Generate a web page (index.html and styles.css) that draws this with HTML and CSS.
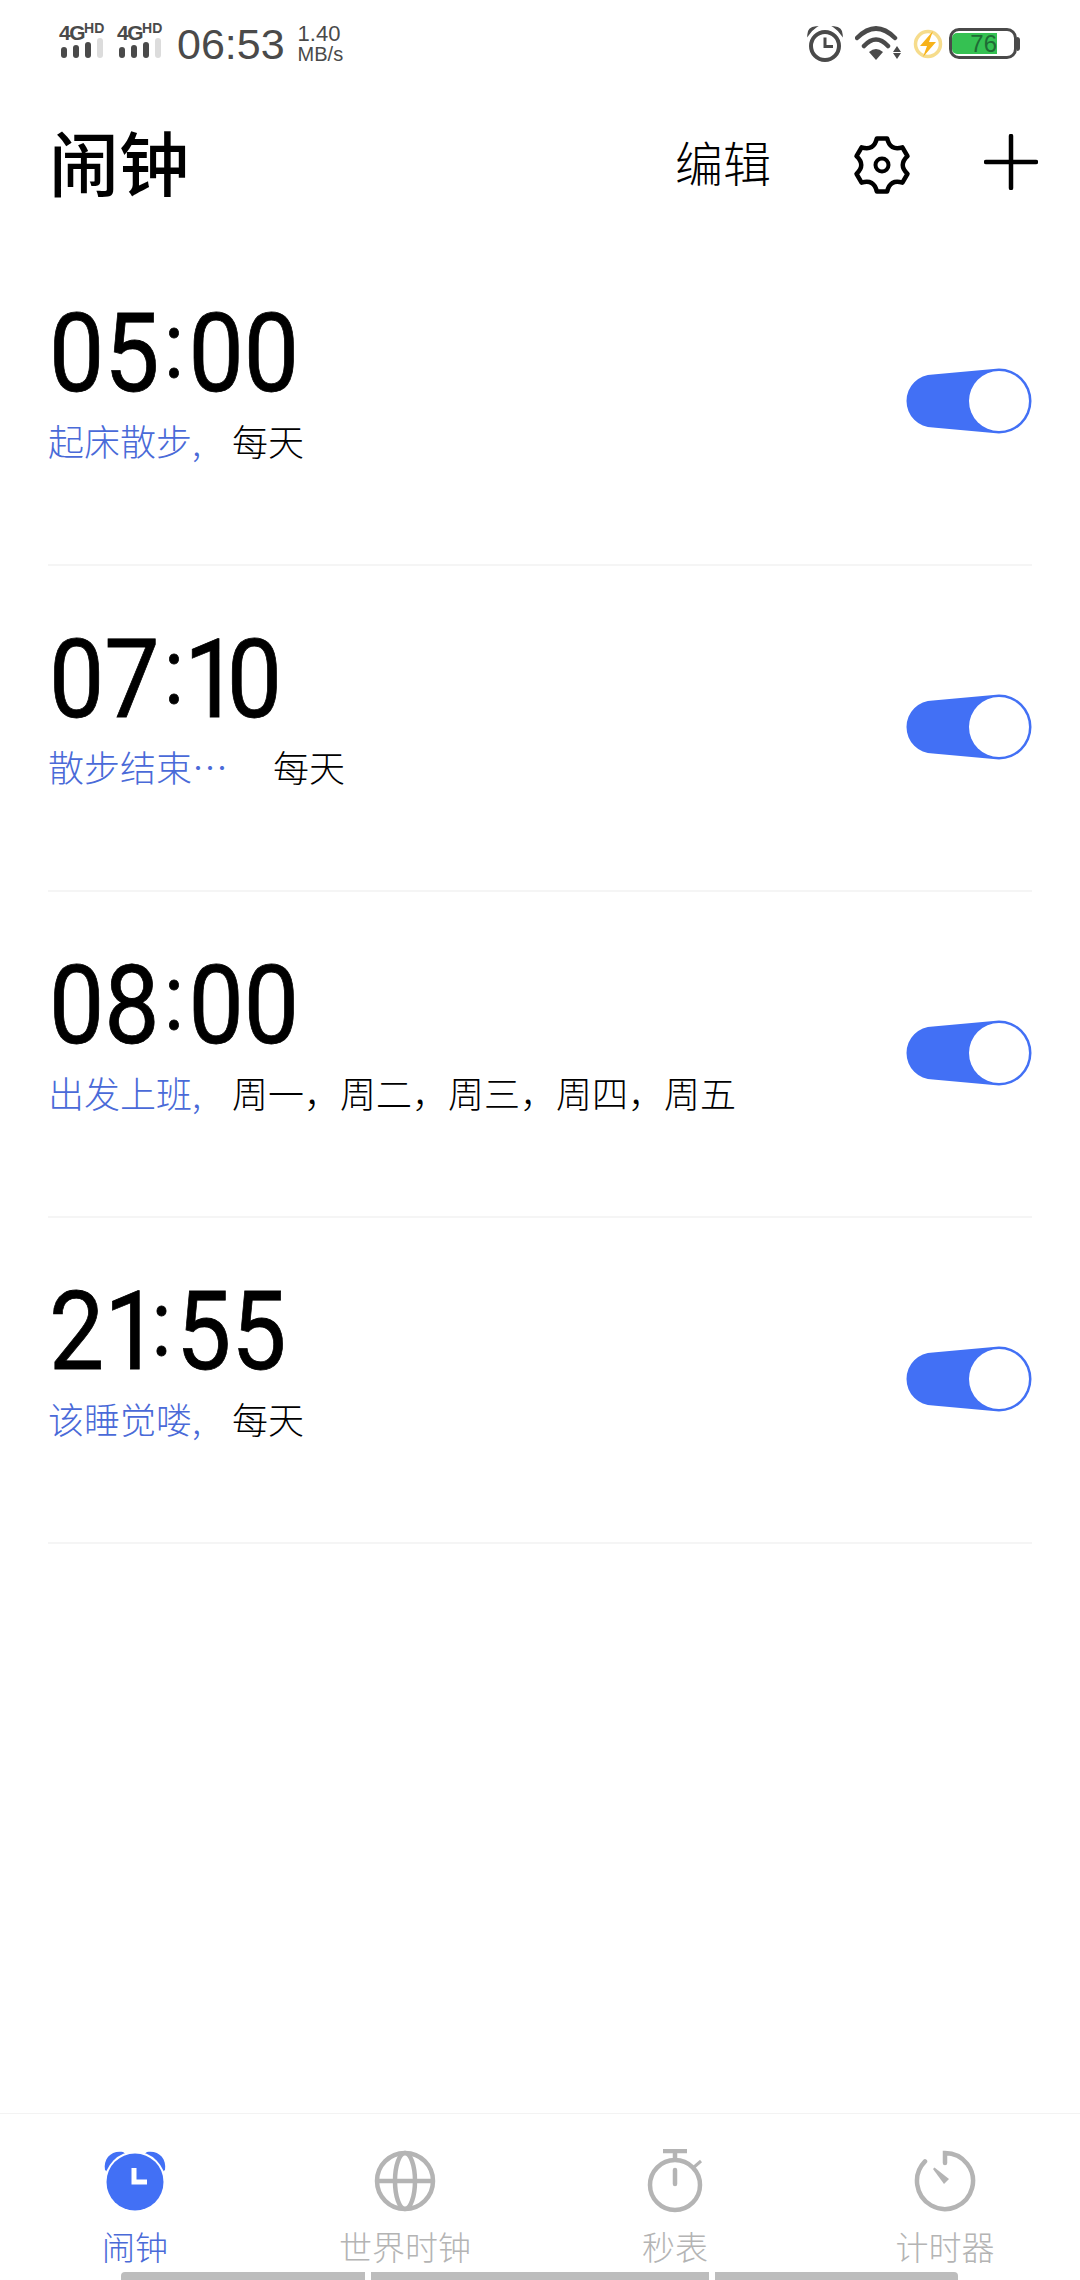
FILE: index.html
```html
<!DOCTYPE html>
<html lang="zh-CN">
<head>
<meta charset="utf-8">
<title>闹钟</title>
<link rel="stylesheet" href="styles.css">
</head>
<body>
<div class="page">
  <div class="status">
    <div class="status-left">
      <div class="net">
        <div class="net-label"><span class="net-g">4G</span><span class="net-hd">HD</span></div>
        <div class="bars"><i class="b1"></i><i class="b2"></i><i class="b3"></i><i class="b4"></i></div>
      </div>
      <div class="net">
        <div class="net-label"><span class="net-g">4G</span><span class="net-hd">HD</span></div>
        <div class="bars"><i class="b1"></i><i class="b2"></i><i class="b3"></i><i class="b4"></i></div>
      </div>
      <div class="clock">06:53</div>
      <div class="speed"><span class="speed-n">1.40</span><span class="speed-u">MB/s</span></div>
    </div>
    <div class="status-right">
      <svg class="s-alarm" width="36" height="36" viewBox="0 0 36 36"><circle cx="18" cy="20" r="14" fill="none" stroke="#4a4a4a" stroke-width="4"/><path d="M18 11.500V20.500H26" fill="none" stroke="#4a4a4a" stroke-width="3"/><path d="M1 9Q1 1.500 9 1Q4.500 4 1 9ZM35 9Q35 1.500 27 1Q31.500 4 35 9Z" fill="#4a4a4a" stroke="#4a4a4a" stroke-width="1.500"/></svg>
      <svg class="s-wifi" width="46" height="34" viewBox="0 0 46 34"><path d="M2 12Q21-7 40 12M9 20Q21 7 33 20" fill="none" stroke="#4a4a4a" stroke-width="4.500" stroke-linecap="round"/><path d="M14 26Q21 20 28 26L21 34Z" fill="#4a4a4a"/><path d="M42 20l4 6h-8zM42 33l4-6h-8z" fill="#4a4a4a"/></svg>
      <svg class="s-bolt" width="30" height="30" viewBox="0 0 30 30"><circle cx="15" cy="15" r="12.500" fill="none" stroke="#f6dc8c" stroke-width="3.500"/><path d="M20 2L7 17H14L10 28L23 13H16Z" fill="#f7b21a"/></svg>
      <div class="battery"><div class="battery-shell"><div class="battery-fill">76</div></div><div class="battery-cap"></div></div>
    </div>
  </div>

  <div class="header">
    <h1 class="title">闹钟</h1>
    <div class="actions">
      <span class="edit">编辑</span>
      <svg class="gear" width="58" height="62" viewBox="-2 -2 58 62"><path d="M21.800 2.500L32.200 2.500Q35 15.100 47.400 11.300L52.500 20.200Q43 29 52.500 37.800L47.400 46.700Q35 42.900 32.200 55.500L21.800 55.500Q19 42.900 6.600 46.700L1.500 37.800Q11 29 1.500 20.200L6.600 11.300Q19 15.100 21.800 2.500Z" fill="none" stroke="#000" stroke-width="4.500" stroke-linejoin="round"/><circle cx="27" cy="29" r="6.500" fill="none" stroke="#000" stroke-width="4"/></svg>
      <svg class="plus" width="54" height="56" viewBox="0 0 54 56"><path d="M27 2V54M2 28H52" stroke="#000" stroke-width="4.500" stroke-linecap="round"/></svg>
    </div>
  </div>

  <div class="alarms">
    <div class="alarm">
      <div class="alarm-text">
        <div class="time">05<span class="colon">:</span>00</div>
        <div class="sub"><span class="label">起床散步,</span><span class="days">每天</span></div>
      </div>
      <svg class="toggle" width="126" height="66" viewBox="0 0 126 66"><path d="M27 6.500L93 0.500A32.500 32.500 0 0 1 93 65.500L27 59.500A26.500 26.500 0 0 1 27 6.500Z" fill="#4270f5"/><circle cx="93" cy="33" r="30" fill="#fff"/></svg>
    </div>
    <div class="alarm">
      <div class="alarm-text">
        <div class="time">07<span class="colon">:</span><span class="one one-shift">1</span>0</div>
        <div class="sub"><span class="label label-long">散步结束⋯</span><span class="days">每天</span></div>
      </div>
      <svg class="toggle" width="126" height="66" viewBox="0 0 126 66"><path d="M27 6.500L93 0.500A32.500 32.500 0 0 1 93 65.500L27 59.500A26.500 26.500 0 0 1 27 6.500Z" fill="#4270f5"/><circle cx="93" cy="33" r="30" fill="#fff"/></svg>
    </div>
    <div class="alarm">
      <div class="alarm-text">
        <div class="time">08<span class="colon">:</span>00</div>
        <div class="sub"><span class="label">出发上班,</span><span class="days">周一，周二，周三，周四，周五</span></div>
      </div>
      <svg class="toggle" width="126" height="66" viewBox="0 0 126 66"><path d="M27 6.500L93 0.500A32.500 32.500 0 0 1 93 65.500L27 59.500A26.500 26.500 0 0 1 27 6.500Z" fill="#4270f5"/><circle cx="93" cy="33" r="30" fill="#fff"/></svg>
    </div>
    <div class="alarm">
      <div class="alarm-text">
        <div class="time">2<span class="one">1</span><span class="colon">:</span>55</div>
        <div class="sub"><span class="label">该睡觉喽,</span><span class="days">每天</span></div>
      </div>
      <svg class="toggle" width="126" height="66" viewBox="0 0 126 66"><path d="M27 6.500L93 0.500A32.500 32.500 0 0 1 93 65.500L27 59.500A26.500 26.500 0 0 1 27 6.500Z" fill="#4270f5"/><circle cx="93" cy="33" r="30" fill="#fff"/></svg>
    </div>
  </div>

  <div class="tabs">
    <div class="tab tab-active">
      <svg width="64" height="64" viewBox="0 0 64 64"><path d="M2 21C0 9 9 1 20 3L32 12L44 3C55 1 64 9 62 21L50 30H14Z" fill="#4270f5"/><circle cx="32" cy="33" r="30.500" fill="#fff"/><circle cx="32" cy="33" r="28.500" fill="#4270f5"/><path d="M31 19V33H44" fill="none" stroke="#fff" stroke-width="5"/></svg>
      <span>闹钟</span>
    </div>
    <div class="tab">
      <svg width="64" height="64" viewBox="0 0 64 64"><g fill="none" stroke="#b4b4b4" stroke-width="4.500"><circle cx="32" cy="32" r="28"/><ellipse cx="32" cy="32" rx="10" ry="28"/><path d="M4 32H60"/></g></svg>
      <span>世界时钟</span>
    </div>
    <div class="tab">
      <svg width="64" height="64" viewBox="0 0 64 64"><g fill="none" stroke="#b4b4b4" stroke-width="4.500"><circle cx="32" cy="36" r="25"/><path d="M20 2H44M32 2V11"/><path d="M50 19L58 12" stroke-width="3"/><path d="M32 21V35" stroke-linecap="round"/></g></svg>
      <span>秒表</span>
    </div>
    <div class="tab">
      <svg width="64" height="64" viewBox="0 0 64 64"><path d="M32 14V4A28 28 0 1 1 12 12.400" fill="none" stroke="#b4b4b4" stroke-width="4.500" stroke-linecap="round"/><path d="M20 20L21.500 18.500L36 30L31 35Z" fill="#b4b4b4"/></svg>
      <span>计时器</span>
    </div>
  </div>
  <div class="nav-strip"><i></i><i></i><i></i></div>
</div>
</body>
</html>
```
FILE: styles.css
```css
* { box-sizing: border-box; }
html, body { margin: 0; padding: 0; background: #fff; }
.page {
  width: 1080px;
  height: 2280px;
  display: flex;
  flex-direction: column;
  overflow: hidden;
  font-family: "Noto Sans CJK SC", "Liberation Sans", sans-serif;
  color: #000;
}

/* Status bar */
.status {
  height: 80px;
  padding: 20px 60px 0 59px;
  display: flex;
  justify-content: space-between;
  align-items: flex-start;
}
.status-left, .status-right { display: flex; align-items: flex-start; }
.net { width: 46px; margin-right: 12px; }
.net-label {
  height: 18px;
  margin-top: 2px;
  display: flex;
  align-items: flex-start;
  font-family: "Liberation Sans", sans-serif;
  font-weight: 700;
  color: #4a4a4a;
  line-height: 1;
  white-space: nowrap;
}
.net-g { font-size: 21px; letter-spacing: -1.500px; }
.net-hd { font-size: 14px; margin-top: -1px; }
.bars { display: flex; align-items: flex-end; gap: 6px; height: 20px; margin-left: 2px; margin-top: -2px; }
.bars i { display: block; width: 6px; background: #4a4a4a; border-radius: 3px; }
.bars .b1 { height: 11px; }
.bars .b2 { height: 13px; }
.bars .b3 { height: 16px; }
.bars .b4 { height: 20px; background: #dcdcdc; }
.clock {
  margin-left: 2px;
  margin-top: 1px;
  font-family: "Liberation Sans", sans-serif;
  font-size: 43px;
  line-height: 46px;
  color: #4a4a4a;
}
.speed {
  display: flex;
  flex-direction: column;
  margin-left: 13px;
  margin-top: 3px;
  font-family: "Liberation Sans", sans-serif;
  color: #4a4a4a;
}
.speed-n { font-size: 22px; line-height: 22px; }
.speed-u { font-size: 20px; line-height: 19px; }
.s-alarm { margin-top: 6px; margin-right: 12px; }
.s-wifi { margin-top: 6px; margin-right: 12px; }
.s-bolt { margin-top: 9px; margin-right: 6px; }
.battery { display: flex; align-items: center; margin-top: 8px; }
.battery-shell {
  width: 68px;
  height: 31px;
  border: 3px solid #4a4a4a;
  border-radius: 10px;
  padding: 2px 0 0 0;
}
.battery-fill {
  width: 45px;
  height: 21px;
  background: #35c152;
  border-radius: 5px 0 0 5px;
  font-family: "Liberation Sans", sans-serif;
  font-size: 24px;
  line-height: 21px;
  text-align: right;
  color: #1f6b35;
}
.battery-cap { width: 3px; height: 14px; background: #4a4a4a; border-radius: 0 3px 3px 0; }

/* Header */
.header {
  height: 158px;
  padding: 4px 42px 0 49px;
  display: flex;
  justify-content: space-between;
  align-items: center;
}
.title { margin: 0; font-size: 70px; font-weight: 500; line-height: 80px; }
.actions { display: flex; align-items: center; }
.edit { font-size: 48px; line-height: 60px; margin-right: 82px; font-weight: 300; }
.gear { margin-right: 73px; margin-top: 8px; }
.plus { margin-top: 2px; }

/* Alarm rows */
.alarms { flex: 1; padding: 2px 48px 0; }
.alarm {
  height: 326px;
  border-bottom: 2px solid #f5f5f5;
  display: flex;
  justify-content: space-between;
  align-items: center;
}
.alarm-text { align-self: flex-start; padding-top: 56px; }
.time {
  height: 116px;
  font-family: Roboto, sans-serif;
  font-weight: 400;
  -webkit-text-stroke: .8px #000;
  font-size: 110px;
  line-height: 116px;
  transform: scaleX(.895);
  transform-origin: 0 50%;
  padding-left: 1px;
  white-space: nowrap;
}
.colon { font-size: 92px; line-height: 0; vertical-align: 14px; margin: 0 5px; }
.one { letter-spacing: -14px; }
.one-shift { margin-left: -5px; }
.sub { display: flex; font-size: 36px; line-height: 50px; margin-top: 3px; white-space: nowrap; font-weight: 300; }
.label { width: 184px; color: #4a6ad8; }
.label-long { width: 225px; }
.days { color: #000; }
.toggle { margin-bottom: 2px; }

/* Tabs */
.tabs {
  height: 159px;
  border-top: 1px solid #f3f3f3;
  padding-top: 35px;
  display: grid;
  grid-template-columns: repeat(4, 270px);
  color: #b4b4b4;
}
.tab {
  display: flex;
  flex-direction: column;
  align-items: center;
  font-size: 33px;
  line-height: 40px;
  font-weight: 300;
}
.tab svg { display: block; margin-bottom: 13px; }
.tab-active { color: #4a6ad8; }
.nav-strip {
  height: 8px;
  padding-left: 121px;
  display: flex;
  gap: 6px;
}
.nav-strip i { display: block; height: 8px; background: #bdbdbd; width: 338px; }
.nav-strip i:first-child { width: 244px; border-radius: 4px 0 0 0; }
.nav-strip i:last-child { width: 243px; border-radius: 0 4px 0 0; }
```
